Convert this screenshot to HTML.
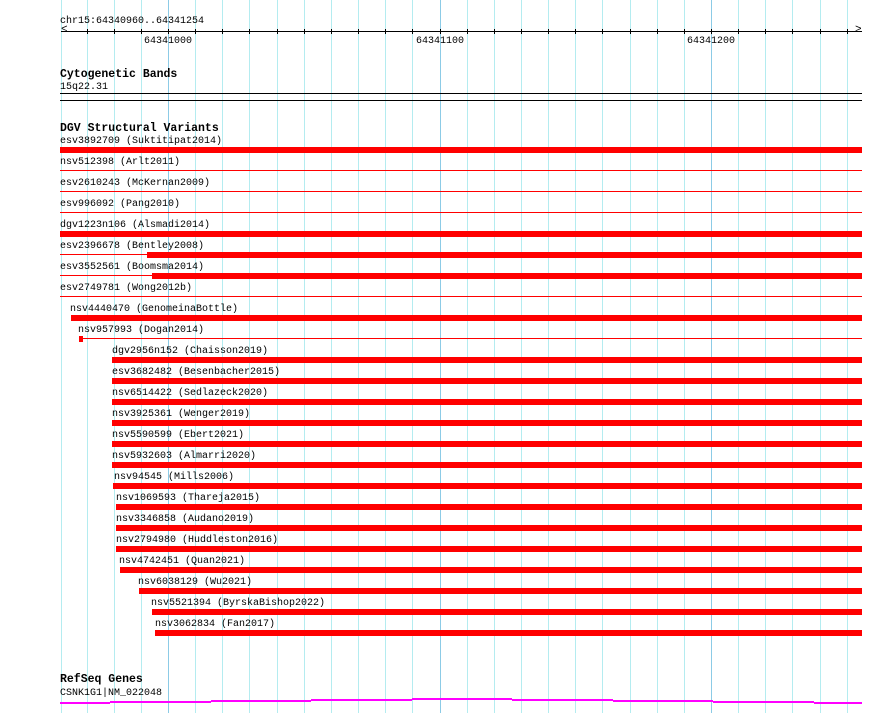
<!DOCTYPE html>
<html><head><meta charset="utf-8"><style>
html,body{margin:0;padding:0;background:#fff;}
#c{position:relative;width:890px;height:713px;overflow:hidden;background:#fff;font-family:"Liberation Mono","DejaVu Sans Mono",monospace;}
.t{position:absolute;font-size:10px;line-height:11px;color:#000;white-space:nowrap;}
.b{position:absolute;font-size:11.5px;font-weight:bold;line-height:12px;color:#000;white-space:nowrap;}
.v{position:absolute;top:0;width:1px;height:713px;background:#b4ecf0;}
.vd{background:#8ccbe6;}
.r{position:absolute;background:#ff0000;}
.k{position:absolute;background:#000;}
.m{position:absolute;background:#ff00ff;height:2px;}
</style></head><body><div id="c"></div>
<script>
var c=document.getElementById('c'),h='';
for(var i=0;i<30;i++){var x=Math.round(711-27.15*(24-i));if(x<58||x>850)continue;if(x<62)x=61;var d=(Math.abs(x-168)<2||Math.abs(x-440)<2||x==711);h+='<div class="v'+(d?' vd':'')+'" style="left:'+x+'px"></div>';}
h+='<div class="t" style="left:60px;top:16px">chr15:64340960..64341254</div>';
h+='<div class="k" style="left:61px;top:31px;width:801px;height:1px"></div>';
for(var i=0;i<30;i++){var x=Math.round(711-27.15*(24-i));if(x<80||x>850)continue;h+='<div class="k" style="left:'+x+'px;top:29px;width:1px;height:5px"></div>';}
h+='<div class="t" style="left:61px;top:25px;font-size:11px">&lt;</div><div class="t" style="left:855px;top:25px;font-size:11px">&gt;</div>';
h+='<div class="t" style="left:144px;top:36px">64341000</div><div class="t" style="left:416px;top:36px">64341100</div><div class="t" style="left:687px;top:36px">64341200</div>';
h+='<div class="b" style="left:60px;top:69px">Cytogenetic Bands</div><div class="t" style="left:60px;top:82px">15q22.31</div>';
h+='<div class="k" style="left:60px;top:93px;width:802px;height:1px"></div><div class="k" style="left:60px;top:100px;width:802px;height:1px"></div>';
h+='<div class="b" style="left:60px;top:123px">DGV Structural Variants</div>';
var rows=[["esv3892709 (Suktitipat2014)",60,60,60],["nsv512398 (Arlt2011)",60,60,null],["esv2610243 (McKernan2009)",60,60,null],["esv996092 (Pang2010)",60,60,null],["dgv1223n106 (Alsmadi2014)",60,60,60],["esv2396678 (Bentley2008)",60,60,147],["esv3552561 (Boomsma2014)",60,60,152],["esv2749781 (Wong2012b)",60,60,null],["nsv4440470 (GenomeinaBottle)",70,null,71],["nsv957993 (Dogan2014)",78,82,-1],["dgv2956n152 (Chaisson2019)",112,null,112],["esv3682482 (Besenbacher2015)",112,null,112],["nsv6514422 (Sedlazeck2020)",112,null,112],["nsv3925361 (Wenger2019)",112,null,112],["nsv5590599 (Ebert2021)",112,null,112],["nsv5932603 (Almarri2020)",112,null,112],["nsv94545 (Mills2006)",114,null,113],["nsv1069593 (Thareja2015)",116,null,116],["nsv3346858 (Audano2019)",116,null,116],["nsv2794980 (Huddleston2016)",116,null,116],["nsv4742451 (Quan2021)",119,null,120],["nsv6038129 (Wu2021)",138,null,139],["nsv5521394 (ByrskaBishop2022)",151,null,152],["nsv3062834 (Fan2017)",155,null,155]];
for(var i=0;i<rows.length;i++){var r=rows[i],y=147+21*i;
h+='<div class="t" style="left:'+r[1]+'px;top:'+(y-11)+'px">'+r[0]+'</div>';
if(r[2]!==null)h+='<div class="r" style="left:'+r[2]+'px;top:'+(y+2)+'px;width:'+(862-r[2])+'px;height:1px"></div>';
if(r[3]===-1)h+='<div class="r" style="left:79px;top:'+y+'px;width:4px;height:6px"></div>';
else if(r[3]!==null)h+='<div class="r" style="left:'+r[3]+'px;top:'+y+'px;width:'+(862-r[3])+'px;height:6px"></div>';}
h+='<div class="b" style="left:60px;top:674px">RefSeq Genes</div><div class="t" style="left:60px;top:688px">CSNK1G1|NM_022048</div>';
var seg=[[60,110,702],[110,211,701],[211,311,700],[311,412,699],[412,512,698],[512,613,699],[613,713,700],[713,814,701],[814,862,702]];
seg.forEach(function(s){h+='<div class="m" style="left:'+s[0]+'px;top:'+s[2]+'px;width:'+(s[1]-s[0])+'px"></div>';});
c.innerHTML=h;
</script></body></html>
